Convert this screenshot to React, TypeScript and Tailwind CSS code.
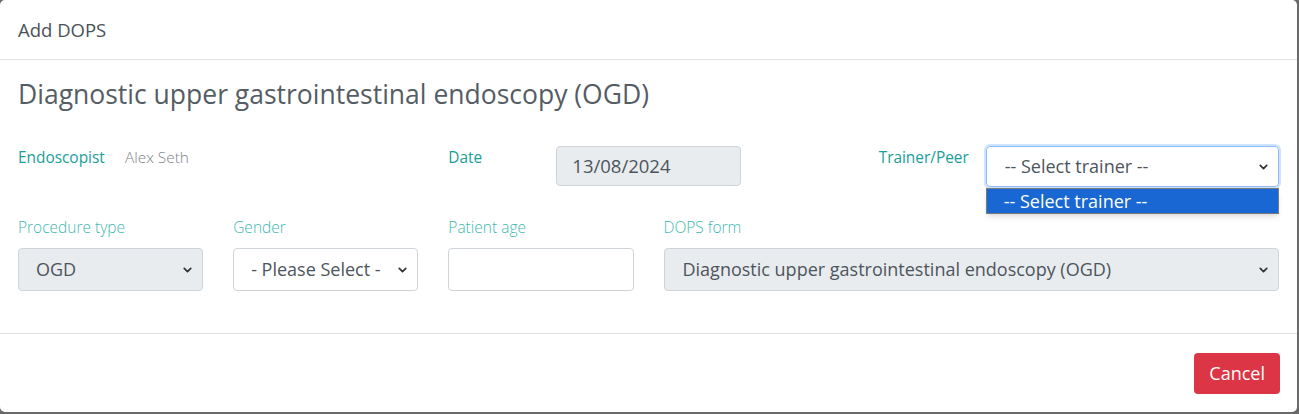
import { ChevronDown } from "lucide-react";

const font = { fontFamily: "'Open Sans', 'Liberation Sans', sans-serif" };

function Chevron() {
  return (
    <ChevronDown
      size={13}
      strokeWidth={3.2}
      className="absolute right-[8px] top-1/2 -translate-y-1/2 text-[#333]"
    />
  );
}

export default function App() {
  return (
    <div
      className="h-[414px] w-[1299px] bg-[#6a6a6a]"
      style={font}
    >
      <div className="flex h-[412px] w-[1297px] flex-col rounded-[5px] bg-white">

        {/* header */}
        <div className="flex h-[60px] items-center border-b border-[#dee2e6] px-[18px]">
          <span className="text-[18.5px] text-[#4a5259]">Add DOPS</span>
        </div>

        {/* body */}
        <div className="flex h-[274px] flex-col border-b border-[#dee2e6] px-[18px]">
          <h2 className="mt-[16px] text-[26.5px] leading-[36px] text-[#555d64]">
            Diagnostic upper gastrointestinal endoscopy (OGD)
          </h2>

          {/* row 1 */}
          <div className="mt-[34px] grid grid-cols-3 gap-x-[30px]">
            <div className="flex pt-[1px]">
              <span className="w-[107px] text-[15.4px] leading-[22px] text-[#1a9e98]">Endoscopist</span>
              <span className="text-[15.4px] leading-[22px] font-light text-[#7b8288]">Alex Seth</span>
            </div>

            <div className="flex">
              <span className="w-[108px] pt-[1px] text-[15.4px] leading-[22px] text-[#1a9e98]">Date</span>
              <div className="flex h-[40px] w-[185px] items-center rounded-[4px] border border-[#ced4da] bg-[#e9ecef] px-[15px] text-[18.5px] text-[#4d555c]">
                13/08/2024
              </div>
            </div>

            <div className="flex">
              <span className="flex-1 pr-[17px] pt-[1px] text-right text-[15.4px] leading-[22px] text-[#1a9e98]">Trainer/Peer</span>
              <div className="relative w-[294px]">
                <div className="relative flex h-[41px] items-center rounded-[4px] border border-[#8cbcf5] px-[18px] text-[18px] text-[#4d555c] shadow-[0_0_0_2px_#cfe2ff]">
                  -- Select trainer --
                  <Chevron />
                </div>
                <div className="absolute left-0 top-[42px] z-10 flex h-[26px] w-full items-center border border-[#7a7a7a] bg-[#1967d2] px-[17px] text-[18px] text-white shadow-md">
                  -- Select trainer --
                </div>
              </div>
            </div>
          </div>

          {/* row 2 */}
          <div className="mt-[29px] grid grid-cols-12 gap-x-[30px]">
            <div className="col-span-2 flex flex-col">
              <span className="text-[15.5px] leading-[22px] font-light text-[#3fb8b0]">Procedure type</span>
              <div className="relative mt-[10px] flex h-[43px] items-center rounded-[4px] border border-[#ced4da] bg-[#e9ecef] px-[17px] text-[18px] text-[#4d555c]">
                OGD
                <Chevron />
              </div>
            </div>

            <div className="col-span-2 flex flex-col">
              <span className="text-[15.5px] leading-[22px] font-light text-[#3fb8b0]">Gender</span>
              <div className="relative mt-[10px] flex h-[43px] items-center rounded-[4px] border border-[#ced4da] bg-white px-[17px] text-[18px] text-[#4d555c]">
                - Please Select -
                <Chevron />
              </div>
            </div>

            <div className="col-span-2 flex flex-col">
              <span className="text-[15.5px] leading-[22px] font-light text-[#3fb8b0]">Patient age</span>
              <div className="mt-[10px] h-[43px] rounded-[4px] border border-[#ced4da] bg-white" />
            </div>

            <div className="col-span-6 flex flex-col">
              <span className="text-[15.5px] leading-[22px] font-light text-[#3fb8b0]">DOPS form</span>
              <div className="relative mt-[10px] flex h-[43px] items-center rounded-[4px] border border-[#ced4da] bg-[#e9ecef] px-[18px] text-[18px] text-[#4d555c]">
                Diagnostic upper gastrointestinal endoscopy (OGD)
                <Chevron />
              </div>
            </div>
          </div>
        </div>

        {/* footer */}
        <div className="flex flex-1 items-center justify-end px-[17px]">
          <button className="h-[41px] rounded-[4px] bg-[#dc3545] px-[15px] text-[18px] text-white">
            Cancel
          </button>
        </div>
      </div>
    </div>
  );
}
